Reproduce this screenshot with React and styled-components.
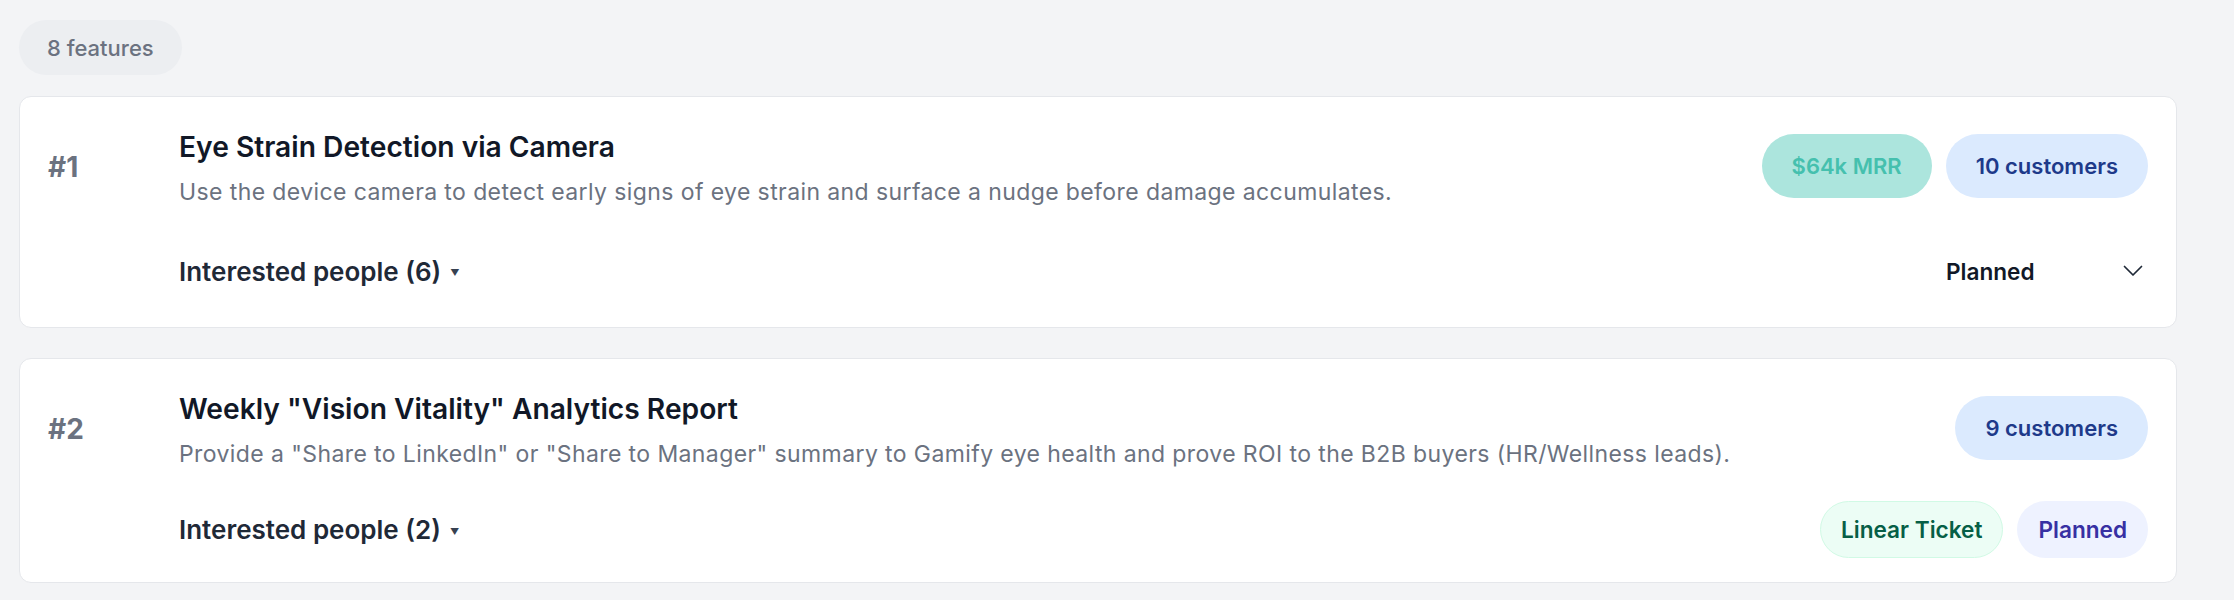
import React from "react"
import styled, { createGlobalStyle, css } from "styled-components"

const GlobalStyle = createGlobalStyle`
    body {
        margin : 0;
        background-color : #f3f4f6;
        font-family : Inter, "Noto Sans", Arial, sans-serif;
    }
`

const features = [
    {
        rank : 1,
        title : "Eye Strain Detection via Camera",
        description : "Use the device camera to detect early signs of eye strain and surface a nudge before damage accumulates.",
        badges : [{ kind : "mrr", label : "$64k MRR" }, { kind : "customers", label : "10 customers" }],
        interested : 6,
        status : "select",
    },
    {
        rank : 2,
        title : 'Weekly "Vision Vitality" Analytics Report',
        description : 'Provide a "Share to LinkedIn" or "Share to Manager" summary to Gamify eye health and prove ROI to the B2B buyers (HR/Wellness leads).',
        badges : [{ kind : "customers", label : "9 customers" }],
        interested : 2,
        status : "tags",
    },
]

const Page = styled.div`
    min-height : 100vh;
    padding : 20px 57px 20px 19px;
    box-sizing : border-box;
`

const CountPill = styled.div`
    display : inline-flex;
    align-items : center;
    height : 55px;
    padding : 0 28px;
    border-radius : 999px;
    background-color : #eceef1;
    color : #6b7280;
    font-size : 22px;
    font-weight : 500;
    margin-bottom : 21px;
`

const List = styled.div`
    display : flex;
    flex-direction : column;
    gap : 30px;
`

const Card = styled.div`
    display : grid;
    grid-template-columns : 131px 1fr;
    background-color : #ffffff;
    border : 1px solid #e5e7eb;
    border-radius : 12px;
    padding : 31px 28px 24px 28px;
`

const Rank = styled.div`
    color : #6b7280;
    font-size : 28px;
    font-weight : 700;
    line-height : 36px;
    margin-top : 21px;
`

const Main = styled.div`
    display : flex;
    flex-direction : column;
    min-width : 0;
`

const TopRow = styled.div`
    display : flex;
    justify-content : space-between;
    align-items : flex-start;
    gap : 40px;
`

const TitleBlock = styled.div`
    display : flex;
    flex-direction : column;
    gap : 9px;
`

const Title = styled.div`
    color : #111827;
    font-size : 28.2px;
    font-weight : 600;
    line-height : 38px;
`

const Description = styled.div`
    color : #6b7280;
    font-size : 23px;
    letter-spacing : 0.4px;
    line-height : 34px;
`

const Badges = styled.div`
    display : flex;
    gap : 14px;
    margin-top : 6px;
    flex-shrink : 0;
`

const pillKinds = {
    mrr : css`
        background-color : #ace5dd;
        color : #45c0ae;
    `,
    customers : css`
        background-color : #dbeafe;
        color : #1e3a8a;
    `,
    linear : css`
        background-color : #ecfdf5;
        color : #065f46;
        border-color : #d1fae5;
    `,
    status : css`
        background-color : #eef2ff;
        color : #3730a3;
    `,
}

const Pill = styled.span`
    display : inline-flex;
    align-items : center;
    box-sizing : border-box;
    height : ${props => props.$small ? "57px" : "64px"};
    padding : 0 ${props => props.$small ? "20px" : "29px"};
    border : 1px solid transparent;
    border-radius : 999px;
    font-size : ${props => props.$small ? "22.6px" : "22px"};
    font-weight : 600;
    ${props => pillKinds[props.$kind]}
`

const BottomRow = styled.div`
    display : flex;
    justify-content : space-between;
    align-items : center;
    margin-top : 30px;
`

const Interested = styled.button`
    display : flex;
    align-items : center;
    gap : 9px;
    padding : 0;
    border : 0;
    background : none;
    font-family : inherit;
    color : #1f2937;
    font-size : 26px;
    font-weight : 600;
    cursor : pointer;
    > span.caret {
        font-size : 9px;
        color : #374151;
        padding-top : 3px;
    }
`

const StatusSelect = styled.div`
    display : flex;
    align-items : center;
    justify-content : space-between;
    box-sizing : border-box;
    width : 218px;
    height : 64px;
    padding : 0 5px 0 16px;
    color : #111827;
    font-size : 22.6px;
    font-weight : 600;
    cursor : pointer;
    > svg {
        stroke : #1f2937;
        stroke-width : 1.7;
        fill : none;
        stroke-linecap : round;
        stroke-linejoin : round;
    }
`

const Tags = styled.div`
    display : flex;
    gap : 14px;
`

function FeatureCard({ feature }) {
    return (
        <Card>
            <Rank>#{feature.rank}</Rank>
            <Main>
                <TopRow>
                    <TitleBlock>
                        <Title>{feature.title}</Title>
                        <Description>{feature.description}</Description>
                    </TitleBlock>
                    <Badges>
                        {feature.badges.map((b) => <Pill key={b.label} $kind={b.kind}>{b.label}</Pill>)}
                    </Badges>
                </TopRow>
                <BottomRow>
                    <Interested>
                        <span>Interested people ({feature.interested})</span>
                        <span className="caret">▼</span>
                    </Interested>
                    {feature.status === "select" ? (
                        <StatusSelect>
                            Planned
                            <svg width="20" height="12" viewBox="0 0 20 12"><path d="M1.5 1.5l8.5 8.5 8.5-8.5" /></svg>
                        </StatusSelect>
                    ) : (
                        <Tags>
                            <Pill $small $kind="linear">Linear Ticket</Pill>
                            <Pill $small $kind="status">Planned</Pill>
                        </Tags>
                    )}
                </BottomRow>
            </Main>
        </Card>
    )
}

export default function App() {
    return (
        <Page>
            <GlobalStyle />
            <CountPill>8 features</CountPill>
            <List>
                {features.map((f) => <FeatureCard key={f.rank} feature={f} />)}
            </List>
        </Page>
    )
}
